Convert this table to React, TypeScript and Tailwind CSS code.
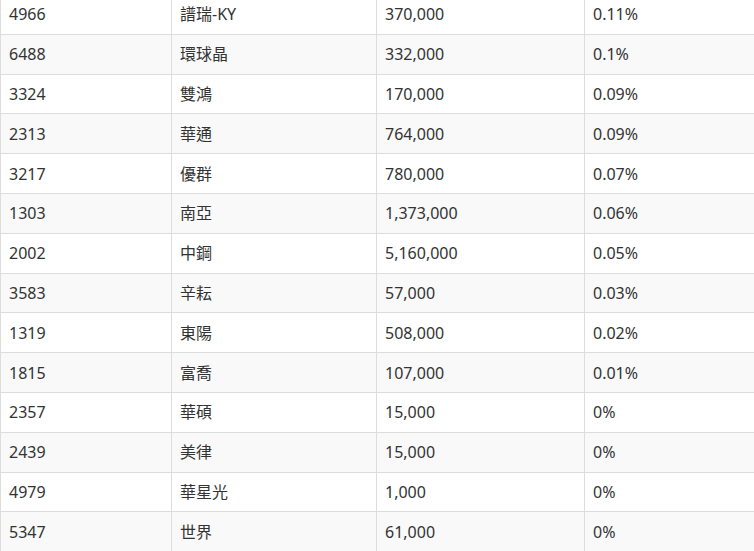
const rows: [string, string, string, string][] = [
  ['4966', '譜瑞-KY', '370,000', '0.11%'],
  ['6488', '環球晶', '332,000', '0.1%'],
  ['3324', '雙鴻', '170,000', '0.09%'],
  ['2313', '華通', '764,000', '0.09%'],
  ['3217', '優群', '780,000', '0.07%'],
  ['1303', '南亞', '1,373,000', '0.06%'],
  ['2002', '中鋼', '5,160,000', '0.05%'],
  ['3583', '辛耘', '57,000', '0.03%'],
  ['1319', '東陽', '508,000', '0.02%'],
  ['1815', '富喬', '107,000', '0.01%'],
  ['2357', '華碩', '15,000', '0%'],
  ['2439', '美律', '15,000', '0%'],
  ['4979', '華星光', '1,000', '0%'],
  ['5347', '世界', '61,000', '0%'],
];

export default function App() {
  return (
    <div className="h-[551px] w-[754px] overflow-hidden bg-white">
      <table
        className="-mt-[6px] w-[789px] table-fixed border-collapse text-[16px] text-[#333]"
        style={{ fontFamily: '"Noto Sans", "Noto Sans CJK TC", sans-serif' }}
      >
        <colgroup>
          <col className="w-[171px]" />
          <col className="w-[205px]" />
          <col className="w-[208px]" />
          <col className="w-[205px]" />
        </colgroup>
        <tbody>
          {rows.map((r, i) => (
            <tr key={r[0]} className={i % 2 === 0 ? 'bg-white' : 'bg-[#f9f9f9]'}>
              {r.map((c, j) => (
                <td key={j} className="h-[39.8px] border border-[#dddddd] px-[8px] py-0 align-middle leading-[20px]">
                  {c}
                </td>
              ))}
            </tr>
          ))}
        </tbody>
      </table>
    </div>
  );
}
